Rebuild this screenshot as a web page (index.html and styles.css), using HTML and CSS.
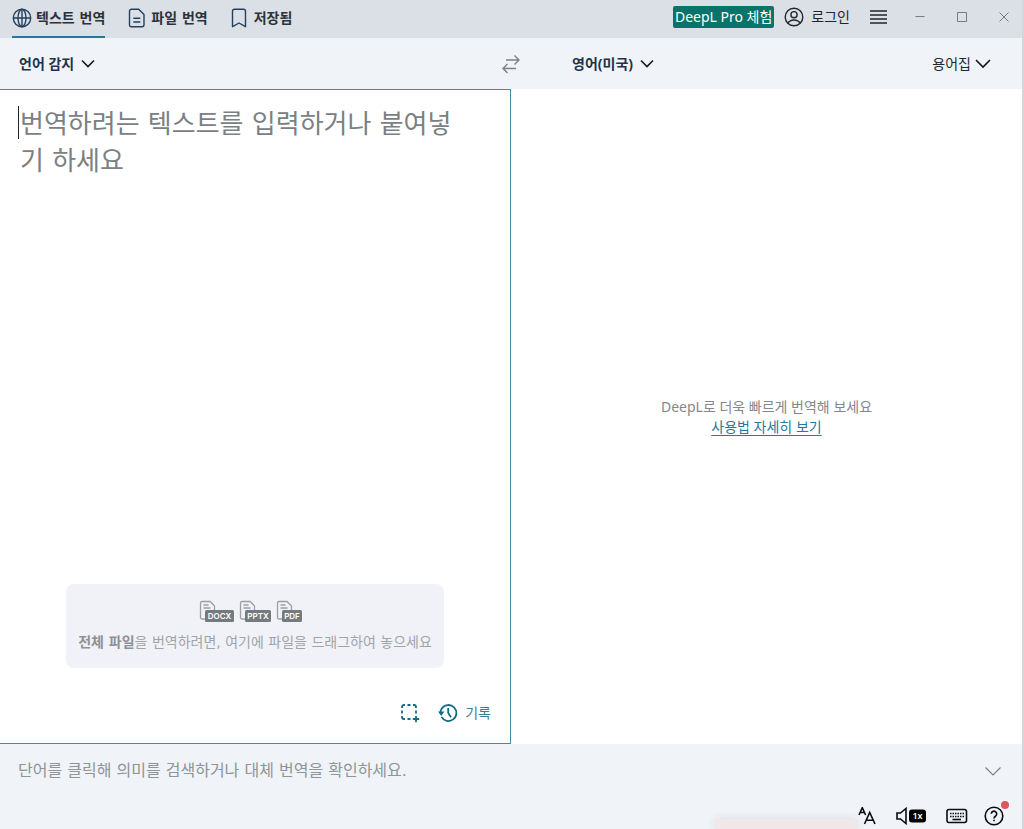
FILE: index.html
```html
<!DOCTYPE html>
<html lang="ko">
<head>
<meta charset="utf-8">
<meta name="viewport" content="width=device-width, initial-scale=1">
<title>DeepL</title>
<link rel="stylesheet" href="styles.css">
</head>
<body>
<div class="app">
  <header class="titlebar">
    <nav class="tabs">
      <button class="tab tab-active" type="button">
        <svg width="20" height="20" viewBox="0 0 20 20" class="line"><circle cx="10" cy="10" r="8.7"/><ellipse cx="10" cy="10" rx="4" ry="8.7"/><path d="M10 1.3v17.4M1.3 10h17.4"/></svg>
        <span>텍스트 번역</span>
      </button>
      <button class="tab" type="button">
        <svg width="20" height="20" viewBox="0 0 20 20" class="line"><path d="M4.5 1.2h7.2l5.3 5.2v10.4a2 2 0 0 1-2 2H4.5a2 2 0 0 1-2-2V3.2a2 2 0 0 1 2-2zM6.3 10.2h7M6.3 14h7"/></svg>
        <span>파일 번역</span>
      </button>
      <button class="tab" type="button">
        <svg width="20" height="20" viewBox="0 0 20 20" class="line"><path d="M4.500 1.200h9a2 2 0 0 1 2 2v15.500l-6.500-3.700-6.500 3.700V3.200a2 2 0 0 1 2-2z"/></svg>
        <span>저장됨</span>
      </button>
    </nav>
    <div class="account">
      <button class="pro" type="button">DeepL Pro 체험</button>
      <button class="login" type="button">
        <svg width="20" height="20" viewBox="0 0 20 20" class="line"><circle cx="10" cy="10" r="8.8"/><circle cx="10" cy="7.7" r="3.1"/><path d="M4 16.2c1.200-2.200 3.300-3.200 6-3.200s4.800 1 6 3.200"/></svg>
        <span>로그인</span>
      </button>
      <button class="icon-button menu" type="button" aria-label="메뉴">
        <svg width="18" height="14" viewBox="0 0 18 14"><path d="M0 1h17M0 5h17M0 9h17M0 13h17" stroke="#20272f" stroke-width="1.6"/></svg>
      </button>
    </div>
    <div class="window-controls">
      <button class="icon-button" type="button" aria-label="최소화"><svg width="12" height="12" viewBox="0 0 12 12"><path d="M1.500 5.500h9"/></svg></button>
      <button class="icon-button" type="button" aria-label="최대화"><svg width="12" height="12" viewBox="0 0 12 12"><path d="M1.500 1.500h9v9h-9z"/></svg></button>
      <button class="icon-button" type="button" aria-label="닫기"><svg width="12" height="12" viewBox="0 0 12 12"><path d="M1.500 1.500l9 9M10.500 1.500l-9 9"/></svg></button>
    </div>
  </header>

  <div class="languages">
    <div class="language-source">
      <button class="language" type="button"><span>언어 감지</span><svg width="14" height="10" viewBox="0 0 14 10" class="chevron"><path d="M1 1.500l6 6 6-6"/></svg></button>
      <button class="icon-button swap" type="button" aria-label="언어 바꾸기">
        <svg width="18" height="20" viewBox="0 0 18 20"><path d="M4 6h13M12.500 1.500L17 6l-4.500 4.500M14 14.500H1M5.500 10L1 14.500 5.500 19"/></svg>
      </button>
    </div>
    <div class="language-target">
      <button class="language" type="button"><span>영어(미국)</span><svg width="14" height="10" viewBox="0 0 14 10" class="chevron"><path d="M1 1.500l6 6 6-6"/></svg></button>
      <button class="language glossary" type="button"><span>용어집</span><svg width="16" height="10" viewBox="0 0 16 10" class="chevron"><path d="M1 1l7 7 7-7"/></svg></button>
    </div>
  </div>

  <main class="panes">
    <section class="source">
      <textarea class="source-text" aria-label="원문" placeholder="번역하려는 텍스트를 입력하거나 붙여넣기 하세요"></textarea>
      <div class="dropzone">
        <div class="file-types">
          <svg width="35" height="22" viewBox="0 0 35 22"><use href="#doc"/><rect x="6" y="10" width="29" height="12" rx="1.500"/><text x="20.500" y="19">DOCX</text></svg>
          <svg width="32" height="22" viewBox="0 0 32 22"><use href="#doc"/><rect x="6" y="10" width="26" height="12" rx="1.500"/><text x="19" y="19">PPTX</text></svg>
          <svg width="26" height="22" viewBox="0 0 26 22">
            <defs><g id="doc"><path d="M3.500 1.500h7.500l4.500 4.500v11.500a1.500 1.500 0 0 1-1.500 1.500H3a1.500 1.500 0 0 1-1.500-1.500V3a1.500 1.500 0 0 1 1.500-1.500zM4.500 5h5M4.500 8h7" fill="none" stroke="#9a9ea3" stroke-width="1.300"/></g></defs>
            <use href="#doc"/><rect x="6" y="10" width="20" height="12" rx="1.500"/><text x="16" y="19">PDF</text></svg>
        </div>
        <p class="drop-text"><strong>전체 파일</strong>을 번역하려면, 여기에 파일을 드래그하여 놓으세요</p>
      </div>
      <div class="source-tools">
        <button class="icon-button capture" type="button" aria-label="화면 캡처">
          <svg width="20" height="20" viewBox="0 0 20 20"><path d="M2 5V4a2 2 0 0 1 2-2h1M7.500 2h3M13 2h1a2 2 0 0 1 2 2v1M16 7.500v3M2 7.500v3M2 13v1a2 2 0 0 0 2 2h1M7.500 16h3M16 13v6.200M12.800 16h6.400"/></svg>
        </button>
        <button class="history" type="button">
          <svg width="20" height="20" viewBox="0 0 20 20"><path d="M4 5.200a8 8 0 1 1-.6 8.700M2.400 9.500a8 8 0 0 1 1.600-4.300M10.200 5v5l2.800 4.200"/><path class="solid" d="M0 8.500h6.500l-3.300 4.500z"/></svg>
          <span>기록</span>
        </button>
      </div>
    </section>
    <section class="target">
      <p class="hint">DeepL로 더욱 빠르게 번역해 보세요</p>
      <a class="hint-link" href="#">사용법 자세히 보기</a>
    </section>
  </main>

  <footer class="footer">
    <div class="dictionary">
      <p>단어를 클릭해 의미를 검색하거나 대체 번역을 확인하세요.</p>
      <button class="icon-button" type="button" aria-label="펼치기"><svg width="18" height="11" viewBox="0 0 18 11"><path d="M1.500 1.500l7.500 7.500 7.500-7.500" fill="none" stroke="#7c8085" stroke-width="1.200"/></svg></button>
    </div>
    <div class="statusbar">
      <button class="icon-button" type="button" aria-label="글자 크기">
        <svg width="18" height="18" viewBox="0 0 18 18" class="status"><path d="M1 8l3.300-7.300L7.600 8M2.200 5.500h4.200M6.500 17L11.700 5.500 17 17M8.300 13.200h6.900"/></svg>
      </button>
      <button class="icon-button" type="button" aria-label="읽기 속도">
        <svg width="30" height="18" viewBox="0 0 30 18" class="status"><path d="M1 6h3.500L10 1.500v15L4.500 12H1z"/><rect class="speed-box" x="13" y="2.500" width="17" height="13" rx="3"/><text x="21.500" y="12">1x</text></svg>
      </button>
      <button class="icon-button" type="button" aria-label="키보드 단축키">
        <svg width="22" height="16" viewBox="0 0 22 16" class="status"><rect x="1" y="1.500" width="19.500" height="13" rx="2"/><path d="M4 5.500h14M4 8.500h14" stroke-dasharray="1.500 1"/><path d="M6.500 11.500h8.500"/></svg>
      </button>
      <button class="icon-button help" type="button" aria-label="도움말">
        <svg width="20" height="20" viewBox="0 0 20 20" class="status"><circle cx="10" cy="10" r="8.800"/><path d="M7.300 7.800a2.700 2.700 0 1 1 4.300 2.200c-1 .7-1.600 1.200-1.600 2.500M10 13.800v1.500"/></svg>
        <span class="badge"></span>
      </button>
    </div>
  </footer>
  <div class="toast"></div>
</div>
</body>
</html>
```

FILE: styles.css
```css
* {
  box-sizing: border-box;
}

body {
  margin: 0;
  font-family: "Noto Sans", "Noto Sans CJK KR", sans-serif;
  font-size: 14px;
  line-height: 20px;
  color: #20272f;
}

p {
  margin: 0;
}

button {
  display: inline-flex;
  align-items: center;
  padding: 0;
  border: 0;
  background: none;
  color: inherit;
  font: inherit;
  white-space: nowrap;
}

svg {
  display: block;
  flex: none;
}

.icon-button {
  justify-content: center;
}

.line {
  fill: none;
  stroke: currentColor;
  stroke-width: 1.4;
  stroke-linejoin: round;
}

.app {
  position: relative;
  display: flex;
  flex-direction: column;
  min-height: 100vh;
  overflow: hidden;
  border-right: 2px solid #d3d7da;
  background: #f0f3f7;
}

.titlebar {
  display: flex;
  align-items: stretch;
  height: 38px;
  padding: 0 12px;
  background: #dbdfe6;
}

.tabs {
  display: flex;
  flex: 1;
  gap: 22px;
}

.tab {
  gap: 4px;
  padding-bottom: 1px;
  border-bottom: 2px solid transparent;
  color: #2b323a;
  font-family: "DejaVu Sans", "Noto Sans CJK KR", sans-serif;
  font-weight: 700;
}

.tab svg {
  color: #23405c;
}

.tab-active {
  border-bottom-color: #2477a1;
}

.account {
  display: flex;
  align-items: center;
  padding-bottom: 4px;
}

.pro {
  height: 22px;
  padding: 0 2px;
  border-radius: 2px;
  background: #07736a;
  color: #fff;
}

.login {
  gap: 7px;
  margin-left: 10px;
}

.menu {
  margin-left: 20px;
}

.window-controls {
  display: flex;
  align-items: center;
  gap: 30px;
  margin-left: 26px;
  padding-bottom: 4px;
}

.window-controls path {
  fill: none;
  stroke: #777b80;
}

.languages {
  display: grid;
  grid-template-columns: 1fr 1fr;
  height: 51px;
}

.language-source,
.language-target {
  display: flex;
  align-items: center;
  justify-content: space-between;
}

.language-source {
  padding-left: 19px;
}

.language-target {
  padding: 0 31px 0 61px;
}

.language {
  gap: 7px;
  color: #1d344c;
  font-weight: 700;
}

.glossary {
  gap: 4px;
  color: #20272f;
  font-weight: 400;
}

.chevron {
  fill: none;
  stroke: #14191f;
  stroke-width: 1.6;
}

.swap {
  margin-right: -9px;
}

.swap path {
  fill: none;
  stroke: #7b8288;
  stroke-width: 1.4;
}

.panes {
  display: grid;
  flex: 1;
  grid-template-columns: 1fr 1fr;
  background: #fff;
}

.source {
  position: relative;
  display: flex;
  flex-direction: column;
  border: 1px solid #3f8f9f;
  border-left: 0;
}

.source::before {
  content: "";
  position: absolute;
  top: 16px;
  left: 18px;
  width: 1px;
  height: 33px;
  background: #222;
}

.source-text {
  flex: 1;
  width: 100%;
  padding: 16px 44px 0 20px;
  border: 0;
  outline: 0;
  background: transparent;
  resize: none;
  color: #20272f;
  font-family: "DejaVu Sans", "Noto Sans CJK KR", sans-serif;
  font-size: 26px;
  line-height: 37px;
}

.source-text::placeholder {
  color: #7b8083;
  opacity: 1;
}

.dropzone {
  display: flex;
  flex-direction: column;
  align-items: center;
  gap: 10px;
  margin: 0 66px;
  padding: 16px 0;
  border-radius: 8px;
  background: #f1f2f7;
  color: #a0a4a8;
  font-family: "DejaVu Sans", "Noto Sans CJK KR", sans-serif;
  white-space: nowrap;
}

.file-types {
  display: flex;
  gap: 5px;
  margin-right: 10px;
}

.file-types rect {
  fill: #757a7f;
}

.file-types text {
  fill: #fff;
  font-family: Inter, sans-serif;
  font-size: 8px;
  font-weight: 600;
  text-anchor: middle;
}

.drop-text strong {
  color: #8c9196;
}

.source-tools {
  display: flex;
  align-items: center;
  justify-content: flex-end;
  gap: 18px;
  padding: 35px 19px 20px 0;
  color: #3d7d93;
}

.source-tools path {
  fill: none;
  stroke: #126a83;
  stroke-width: 1.8;
}

.source-tools .solid {
  fill: #126a83;
  stroke: none;
}

.history {
  gap: 7px;
}

.target {
  display: flex;
  flex-direction: column;
  align-items: center;
  justify-content: center;
}

.hint {
  color: #85888b;
}

.hint-link {
  color: #2479a0;
  text-underline-offset: 3px;
}

.footer {
  height: 85px;
  padding: 16px 18px 0 18px;
}

.dictionary {
  display: flex;
  align-items: center;
  justify-content: space-between;
  padding-right: 2px;
  color: #8f9497;
  font-family: "DejaVu Sans", "Noto Sans CJK KR", sans-serif;
  font-size: 16px;
}

.dictionary p {
  line-height: 22px;
}

.statusbar {
  display: flex;
  align-items: center;
  justify-content: flex-end;
  gap: 20px;
  padding-top: 24px;
}

.status {
  fill: none;
  stroke: #0b0d10;
  stroke-width: 1.6;
}

.status .speed-box {
  fill: #000;
  stroke: none;
}

.status text {
  fill: #fff;
  stroke: none;
  font-size: 9px;
  font-weight: 600;
  text-anchor: middle;
}

.help {
  position: relative;
  margin-left: -4px;
}

.badge {
  position: absolute;
  top: -5px;
  right: -5px;
  width: 8px;
  height: 8px;
  border-radius: 50%;
  background: #dc5858;
}

.toast {
  position: absolute;
  right: 165px;
  bottom: 0;
  width: 142px;
  height: 10px;
  border-radius: 4px 4px 0 0;
  background: #f0e8e8;
  box-shadow: 0 0 8px #d9d9dd;
}
```
